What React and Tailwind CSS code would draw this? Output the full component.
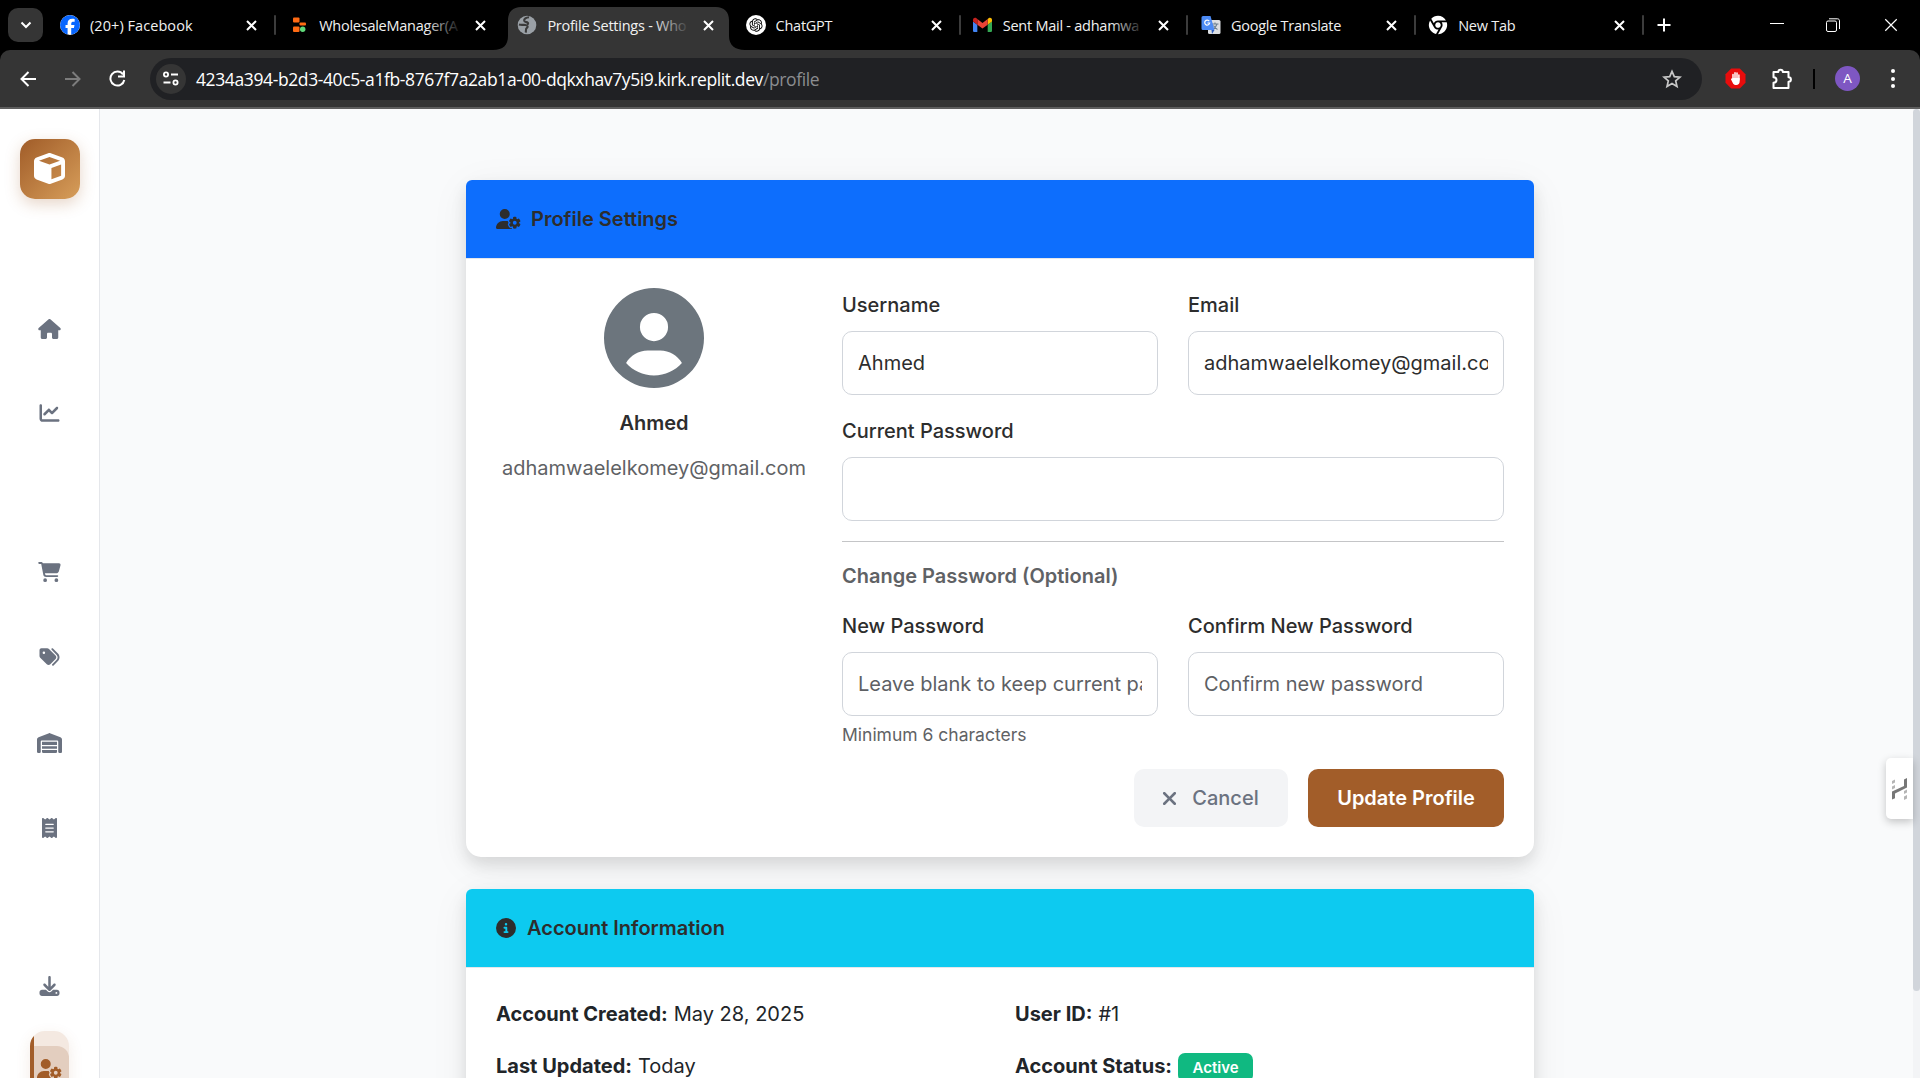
import React from "react";
import {
  FaHouse, FaChartLine, FaCartShopping, FaTags, FaWarehouse, FaReceipt, FaDownload,
  FaUserGear, FaCube, FaCircleUser, FaCircleInfo, FaXmark, FaFacebook,
} from "react-icons/fa6";
import { RiOpenaiFill, RiChromeFill } from "react-icons/ri";

const uiFont = "font-['Open_Sans','Noto_Sans',sans-serif]";

function ReplitIcon() {
  return (
    <svg width="13" height="19" viewBox="0 0 13 19">
      <rect x="0" y="1.500" width="6.500" height="5" rx="1" fill="#ff6a13" />
      <rect x="6.500" y="6.500" width="6.500" height="3" rx="1" fill="#ff6a13" />
      <rect x="0" y="10.500" width="6.500" height="5.500" rx="1" fill="#ff6a13" />
      <circle cx="9.700" cy="13.300" r="2.700" fill="#5fd97a" />
    </svg>
  );
}

function GlobeIcon() {
  return (
    <svg width="20" height="20" viewBox="0 0 20 20">
      <circle cx="10" cy="10" r="9.300" fill="#9aa0a6" />
      <path d="M12 2.200C9 2.500 6.800 4 7.200 5.800c.4 1.600 2.600 1 3.600 1.900.7.700.2 1.500-.8 1.700M2 9.500c2.200.8 4.500.1 6.600.5 2.400.4 2.600 2.200 1.200 3-1.200.7-.8 2.300-1 4.600" fill="none" stroke="#3a3a3a" strokeWidth="2.100" />
    </svg>
  );
}

function GmailIcon() {
  return (
    <svg width="19" height="19" viewBox="52 42 88 72">
      <path fill="#4285f4" d="M58 108h14V74L52 59v43c0 3.320 2.690 6 6 6" />
      <path fill="#34a853" d="M120 108h14c3.320 0 6-2.690 6-6V59l-20 15" />
      <path fill="#fbbc04" d="M120 48v26l20-15v-8c0-7.420-8.470-11.650-14.400-7.200" />
      <path fill="#ea4335" d="M72 74V48l24 18 24-18v26L96 92" />
      <path fill="#c5221f" d="M52 51v8l20 15V48l-5.600-4.200c-5.940-4.450-14.400-.22-14.400 7.200" />
    </svg>
  );
}

function TranslateIcon() {
  return (
    <svg width="20" height="20" viewBox="0 0 20 20">
      <rect x="7" y="5" width="12.500" height="14" rx="1.500" fill="#dcdfe3" />
      <path d="M10.500 9h7M14 7.500V9M16 9c-.7 2.500-2.500 4.500-4.500 5.500M12.500 10.500c1 2 2.500 3.200 4 4" stroke="#6b7f90" strokeWidth="1.100" fill="none" />
      <path d="M2 1h7.500l4 14H2A1.500 1.500 0 0 1 .5 13.500v-11A1.500 1.500 0 0 1 2 1z" fill="#4c8bf5" />
      <path d="M10.500 15h3l-2.500 4z" fill="#3060c0" />
      <path d="M8.300 6.200A2.500 2.500 0 1 0 8.700 8H6.400" stroke="#fff" strokeWidth="1.200" fill="none" />
    </svg>
  );
}

function Cross({ size = 11, w = 2 }) {
  return (
    <svg width={size} height={size} viewBox="0 0 11 11" className="block">
      <path d="M1 1l9 9M10 1l-9 9" stroke="#fff" strokeWidth={w} />
    </svg>
  );
}

const tabs = [
  { title: "(20+) Facebook", icon: <FaFacebook size={20} color="#0866ff" className="rounded-full bg-white" />, sep: true, tracking: "tracking-[0.060px]" },
  { title: "WholesaleManager(A", icon: <ReplitIcon />, fade: "from-black", shift: "pl-px" },
  { title: "Profile Settings - Who", icon: <GlobeIcon />, active: true, fade: "from-[#353535]", shift: "pl-px" },
  { title: "ChatGPT", icon: <span className="flex size-5 items-center justify-center rounded-full bg-white text-black"><RiOpenaiFill size={16} /></span>, sep: true, shift: "pl-px" },
  { title: "Sent Mail - adhamwa", icon: <GmailIcon />, sep: true, fade: "from-black" },
  { title: "Google Translate", icon: <TranslateIcon />, sep: true },
  { title: "New Tab", icon: <RiChromeFill size={22} color="#fff" />, sep: true, shift: "-ml-px" },
];

function Tab({ tab }) {
  return (
    <div className={`relative flex h-[50px] w-[228.200px] shrink-0 items-center ${tab.shift || ""}`}>
      {tab.active && (
        <svg className="absolute top-[7px] -left-3" width="252" height="43" viewBox="0 0 252 43">
          <path d="M0 43c10 0 15-5 15-14V13C15 5 20 0 28 0h195c8 0 13 5 13 13v16c0 9 6 14 16 14z" fill="#353535" />
        </svg>
      )}
      <div className="relative ml-[10px] flex w-[22px] shrink-0 justify-center">{tab.icon}</div>
      <div className={`relative mt-px ml-[9px] w-[143px] shrink-0 overflow-hidden whitespace-nowrap text-[14.500px] leading-5 text-[#f1f1f1] ${tab.tracking || "tracking-[-0.250px]"}`}>
        {tab.title}
        {tab.fade && <div className={`absolute inset-y-0 right-0 w-9 bg-gradient-to-l ${tab.fade} to-transparent`} />}
      </div>
      <div className="relative ml-[12.500px]"><Cross /></div>
      {tab.sep && <div className="ml-[17px] h-5 w-[2px] rounded-full bg-[#3c3c3c]" />}
    </div>
  );
}

function TabStrip() {
  return (
    <div className="flex h-[50px] items-center bg-black">
      <div className="ml-2 mr-1.5 flex h-[34px] w-[35px] shrink-0 items-center justify-center rounded-[10px] bg-[#353535]">
        <svg width="12" height="8" viewBox="0 0 12 8"><path d="M1.500 1.500L6 6l4.500-4.500" stroke="#fff" strokeWidth="2" fill="none" /></svg>
      </div>
      {tabs.map((t) => <Tab key={t.title} tab={t} />)}
      <svg className="ml-3" width="14" height="14" viewBox="0 0 14 14"><path d="M7 .5v13M.5 7h13" stroke="#fff" strokeWidth="2" /></svg>
      <div className="ml-auto flex items-center pr-[22px]">
        <svg width="14" height="14" viewBox="0 0 14 14"><path d="M0 5.500h14" stroke="#fff" strokeWidth="1" /></svg>
        <svg className="ml-[42px]" width="14" height="14" viewBox="0 0 14 14" fill="none" stroke="#fff">
          <rect x=".5" y="3" width="10" height="10.500" rx="1.500" />
          <path d="M3 .8h8.500c1.200 0 2 .8 2 2V11" />
        </svg>
        <div className="ml-11"><Cross size={14} w={0.9} /></div>
      </div>
    </div>
  );
}

function Toolbar() {
  return (
    <div className="bg-black">
      <div className="flex h-[57px] items-center rounded-t-[10px] bg-[#353535]">
        <svg className="ml-5" width="16" height="16" viewBox="0 0 16 16" fill="none" stroke="#fff" strokeWidth="2"><path d="M16 8H2M8.500 1L1.500 8l7 7" /></svg>
        <svg className="ml-[29px]" width="16" height="16" viewBox="0 0 16 16" fill="none" stroke="#7c7c7c" strokeWidth="2"><path d="M0 8h14M7.500 1l7 7-7 7" /></svg>
        <svg className="ml-[28px]" width="17" height="17" viewBox="0 0 17 17" fill="none" stroke="#fff" strokeWidth="2"><path d="M14 4.300A7 7 0 1 0 15.300 10" /><path d="M15 .5v6H9" /></svg>
        <div className="ml-[24px] flex h-[42px] w-[1552px] items-center rounded-full bg-[#202124]">
          <div className="ml-[6px] flex size-[30px] items-center justify-center rounded-full bg-[#353535]">
            <svg width="16" height="15" viewBox="0 0 16 15" fill="none" stroke="#fff" strokeWidth="1.800"><circle cx="3" cy="3.500" r="2.100" /><path d="M8 3.500h7M0.500 11.500h7" /><circle cx="12.500" cy="11.500" r="2.100" /></svg>
          </div>
          <div className="mt-px ml-[10px] whitespace-nowrap text-[17.500px] leading-6 tracking-[-0.390px] text-white">
            4234a394-b2d3-40c5-a1fb-8767f7a2ab1a-00-dqkxhav7y5i9.kirk.replit.dev<span className="text-[#8b8d90]">/profile</span>
          </div>
          <svg className="mr-[20px] ml-auto" width="20" height="20" viewBox="0 0 20 20" fill="none" stroke="#c7c7c7" strokeWidth="1.700"><path d="M10 2.300l2.300 5.300 5.700.5-4.300 3.800 1.300 5.600-5-3-5 3 1.300-5.600L2 8.100l5.700-.5z" /></svg>
        </div>
        <svg className="ml-[23px]" width="21" height="21" viewBox="0 0 21 21">
          <path d="M6.200.5h8.600l5.700 5.700v8.600l-5.700 5.700H6.200L.5 14.800V6.200z" fill="#e80c0c" />
          <path d="M8 6.500V11M10 4.700V11M12 5V11M13.900 7v5" stroke="#fff" strokeWidth="1.500" strokeLinecap="round" />
          <path d="M7.250 10h7.400v3.500c0 2-1.300 3.500-3.300 3.500-1.900 0-3-.8-3.800-2.600l-1.500-3c-.3-.9.700-1.300 1.200-.5z" fill="#fff" />
        </svg>
        <svg className="ml-[25px]" width="22" height="22" viewBox="0 0 22 22" fill="none" stroke="#fff" strokeWidth="2" strokeLinejoin="round">
          <path d="M2.500 4h4.800c0-3 4.500-3 4.500 0h5.700v5.200c3.200 0 3.200 4.600 0 4.600v6.200h-15v-5.200c4-.3 4-5.300 0-5.600z" />
        </svg>
        <div className="ml-[20px] h-[20px] w-[2px] bg-black" />
        <div className="ml-[20px] flex size-[25px] items-center justify-center rounded-full bg-[#7e57c2] text-[13.500px] text-white">A</div>
        <div className="ml-[31px] flex flex-col gap-[3.500px]">
          <div className="size-1 rounded-full bg-white" /><div className="size-1 rounded-full bg-white" /><div className="size-1 rounded-full bg-white" />
        </div>
      </div>
      <div className="h-[2px] bg-[#5e5e5e]" />
    </div>
  );
}

const nav = [
  { I: FaHouse, m: "mt-[110px]", w: "w-[23px]" },
  { I: FaChartLine, m: "mt-[44px]", w: "w-[21px]" },
  { I: FaCartShopping, m: "mt-[119px]", w: "w-[23px]" },
  { I: FaTags, m: "mt-[45px]", w: "w-[21px]" },
  { I: FaWarehouse, m: "mt-[46px]", w: "w-[25px]" },
  { I: FaReceipt, m: "mt-[45px]", w: "w-[15px]" },
  { I: FaDownload, m: "mt-[118px]", w: "w-[21px]" },
];

function Sidebar() {
  return (
    <div className="flex w-[100px] shrink-0 flex-col items-start overflow-hidden border-r border-[#e5e7eb] bg-white pt-[30px]">
      <div className="ml-5 flex size-[60px] shrink-0 items-center justify-center rounded-[15px] bg-linear-135 from-[#a05c28] to-[#d79e5a] pr-px pb-px text-[31px] text-white shadow-[0_5px_15px_rgba(160,92,40,0.25)]">
        <FaCube />
      </div>
      {nav.map(({ I, m, w }, i) => (
        <div key={i} className={`flex h-10 w-[99px] shrink-0 items-center justify-center text-[#6b7280] ${m}`}><I className={`h-5 shrink-0 ${w}`} /></div>
      ))}
      <div className="mt-[25px] ml-[30px] flex h-[80px] w-[39px] shrink-0 overflow-hidden rounded-[15px] bg-[#f4e9e1] shadow-[0_5px_15px_rgba(160,92,40,0.12)]">
        <div className="w-1 shrink-0 bg-[#a25d29]" />
        <div className="mt-[15px] w-[35px] rounded-tr-[12px] bg-[#e3cebf] pt-[13px] pl-[3px] text-[#a25d29]"><FaUserGear className="h-5 w-[25px]" /></div>
      </div>
    </div>
  );
}

function Field({ label, value, placeholder, className = "" }) {
  return (
    <div className={`min-w-0 flex-1 ${className}`}>
      <div className="text-[20px] leading-[30px] font-medium text-[#2d2d2d]">{label}</div>
      <div className="mt-[11px] flex h-16 items-center rounded-[10px] border border-[#d1d5db] px-[15px]">
        <div className={`w-full overflow-hidden whitespace-nowrap text-[20px] leading-[30px] ${value ? "text-[#2d2d2d]" : "text-[#5d6064]"}`}>{value || placeholder}</div>
      </div>
    </div>
  );
}

const cardShadow = "shadow-[0_8px_16px_rgba(0,0,0,0.11),0_8px_40px_rgba(0,0,0,0.06)]";

function CardHeader({ icon, title, className }) {
  return (
    <div className={`flex h-[79px] items-center rounded-t-[6px] border-b border-[#e5e7eb] px-[30px] text-[20px] leading-[30px] font-semibold text-[#2d2d2d] ${className}`}>
      {icon}<span>{title}</span>
    </div>
  );
}

function ProfileCard() {
  return (
    <div className={`h-[677px] w-[1068px] rounded-t-[6px] rounded-b-[15px] bg-white ${cardShadow}`}>
      <CardHeader className="bg-[#0d6efd]" title="Profile Settings" icon={<FaUserGear className="mr-[10px] h-5 w-[25px]" />} />
      <div className="flex px-[30px]">
        <div className="flex w-[316px] shrink-0 flex-col items-center pt-[29px]">
          <FaCircleUser size={100} color="#6c757d" />
          <div className="mt-[20px] text-[20px] leading-[30px] font-semibold text-[#2d2d2d]">Ahmed</div>
          <div className="mt-[15px] text-[20px] leading-[30px] text-[#5f6265]">adhamwaelelkomey@gmail.com</div>
        </div>
        <div className="ml-[30px] min-w-0 flex-1 pt-[31px]">
          <div className="flex gap-[30px]">
            <Field label="Username" value="Ahmed" />
            <Field label="Email" value="adhamwaelelkomey@gmail.com" />
          </div>
          <Field className="mt-[21px]" label="Current Password" />
          <div className="mt-[20px] h-px bg-[#c4c5c7]" />
          <div className="mt-[19px] text-[20px] leading-[30px] font-semibold text-[#5f6265]">Change Password (Optional)</div>
          <div className="mt-[20px] flex gap-[30px]">
            <Field label="New Password" placeholder="Leave blank to keep current password" />
            <Field label="Confirm New Password" placeholder="Confirm new password" />
          </div>
          <div className="mt-[6px] text-[17.500px] leading-[26px] text-[#5f6265]">Minimum 6 characters</div>
          <div className="mt-[21px] flex justify-end gap-5 text-[20px] leading-[30px]">
            <div className="flex h-[58px] w-[154px] items-center justify-center gap-[12px] rounded-[10px] bg-[#f3f4f6] font-medium text-[#6b7280]">
              <FaXmark size={21} className="-ml-1" />Cancel
            </div>
            <div className="flex h-[58px] w-[196px] items-center justify-center rounded-[10px] bg-[#a25d29] font-semibold text-white">Update Profile</div>
          </div>
        </div>
      </div>
    </div>
  );
}

function Info({ label, children }) {
  return (
    <div className="flex h-[30px] items-center text-[20px] leading-[30px] text-[#212529]">
      <span className="mr-[6px] font-bold">{label}</span>{children}
    </div>
  );
}

function AccountCard() {
  return (
    <div className={`mt-8 h-[240px] w-[1068px] rounded-t-[6px] rounded-b-[15px] bg-white ${cardShadow}`}>
      <CardHeader className="bg-[#0dcaf0]" title="Account Information" icon={<FaCircleInfo size={20} className="mr-[11px]" />} />
      <div className="grid grid-cols-[519px_1fr] gap-y-[22px] px-[30px] pt-[31px]">
        <Info label="Account Created:">May 28, 2025</Info>
        <Info label="User ID:">#1</Info>
        <Info label="Last Updated:">Today</Info>
        <Info label="Account Status:">
          <span className="mt-[2px] flex h-[29px] w-[75px] items-center justify-center rounded-[7px] bg-[#10b981] pt-[2px] text-[15px] font-semibold text-white">Active</span>
        </Info>
      </div>
    </div>
  );
}

function SideWidget() {
  return (
    <div className="absolute top-[649px] right-[7px] flex h-[61px] w-[27px] items-center rounded-l-[5px] bg-white pl-[6px] shadow-[0_3px_8px_rgba(0,0,0,0.22)]">
      <svg width="15" height="22" viewBox="0 0 15 22">
        <path d="M0 21.500V13.500l12-5.500V1.500l3-1.500v9.500L3 15.500v4.800z" fill="#777" />
        <path d="M0 3l3-1.500v3L0 6zM0 8.500L3 7v3L0 11.500zM12 13l3-1.500v3L12 16zM12 18.500l3-1.500v3.500L12 22z" fill="#b5b5b5" />
      </svg>
    </div>
  );
}

export default function App() {
  return (
    <div className="flex h-[1078px] w-[1920px] flex-col overflow-hidden">
      <div className={uiFont}>
        <TabStrip />
        <Toolbar />
      </div>
      <div className="relative flex min-h-0 flex-1 bg-[#f9fafb] font-['Inter',sans-serif]">
        <Sidebar />
        <div className="flex flex-1 flex-col items-center overflow-hidden pt-[71px] pr-[13px]">
          <div className="shrink-0">
            <ProfileCard />
            <AccountCard />
          </div>
        </div>
        <div className="w-[7px] bg-[#f3f4f6]"><div className="h-[882px] rounded-full bg-[#d1d5db]" /></div>
        <SideWidget />
      </div>
    </div>
  );
}
